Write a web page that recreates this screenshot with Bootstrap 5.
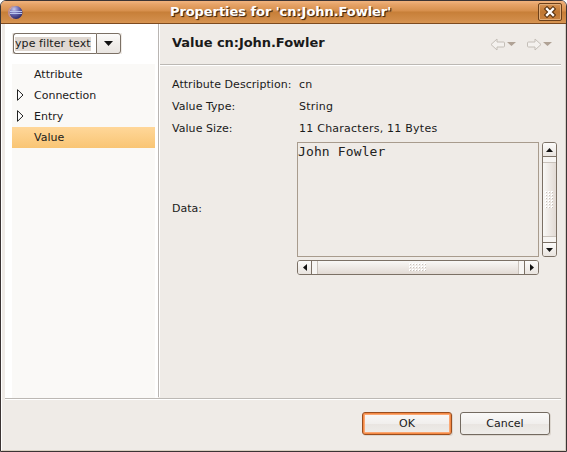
<!DOCTYPE html>
<html lang="en">
<head>
<meta charset="utf-8">
<meta name="viewport" content="width=device-width, initial-scale=1">
<title>Properties for 'cn:John.Fowler'</title>
<link href="https://cdn.jsdelivr.net/npm/bootstrap@5.3.0/dist/css/bootstrap.min.css" rel="stylesheet">
<style>
html,body{height:100%;overflow:hidden}
body{background:#fff;font-family:"DejaVu Sans",sans-serif;font-size:11px;line-height:14px;color:#1a1a1a}
svg{display:block;flex:none}
.win{width:567px;height:452px;background:#efebe7;border:1px solid #3b3434;border-radius:6px 6px 0 0;overflow:hidden}
.titlebar{flex:none;height:23px;border-bottom:1px solid #7d4a1f;padding:0 4px 0 7px;background:linear-gradient(#f0b683 0,#e7a469 3px,#d68f4c 10px,#c77f38 11px,#d18c49 19px,#d89552 22px);box-shadow:inset 0 1px #efb07a}
.title-text{font-size:13px;letter-spacing:-.06px;font-weight:700;color:#fff;text-shadow:1px 1px 1px #4a2a10,1px 1px 0 #6b4420;white-space:nowrap;line-height:20px}
.close-btn{width:24px;height:18px;border:1px solid #6d4019;border-radius:2px;box-shadow:inset 0 0 0 1px #e0ac78;background:linear-gradient(#d99455,#bf7731 50%,#c98340);padding:0}
.inner{padding:0 4px 0 3px;border-left:1px solid #fff;border-right:1px solid #d3ccc3;border-bottom:1px solid #d8cfc0}
.upper{height:374px}
.side{width:153px;background:#fff;padding:9px 4px 0 7px}
.vline{width:2px;height:373px;background:linear-gradient(90deg,#b9b5b2 50%,#fff 50%)}
.hline{height:2px;background:linear-gradient(#bcb8b4 50%,#fff 50%)}
.filter{width:110px;height:21px;margin-bottom:10px;background:#efebe7}
.filter-field{width:83px;background:#fff;border:1px solid #7b7065;border-right:0;border-radius:3px 0 0 3px;margin-left:1px;padding:3px 0 2px 1px;overflow:hidden}
.filter-sel{display:block;width:76px;height:14px;background:#e0d8d1;white-space:nowrap;overflow:visible;letter-spacing:.08px}
.filter-drop{width:25px;border:1px solid #7b7065;border-radius:0 3px 3px 0;background:linear-gradient(#fcfbfa,#f1eeeb 50%,#e9e5e1)}
.tree{width:143px;height:334px;background:#faf9f7}
.tree-row{height:21px;padding:1px 0 0 5px}
.tree-row .twist{width:17px;padding-bottom:2px}
.tree-row.sel{background:linear-gradient(#ffd799,#f9c574)}
.head{height:40px;padding:0 7px 0 12px}
.head-title{font-size:13px;line-height:18px;font-weight:700;white-space:nowrap;letter-spacing:-.05px;padding-bottom:2px}
.prop{height:22px;padding-left:12px}
.prop-name{width:127px;white-space:nowrap;letter-spacing:.05px}
.val{letter-spacing:.24px}
.data-row{margin-top:2px;padding-left:12px}
.data-label{width:125px;height:133px}
.data-area{gap:3px;margin-bottom:3px}
.data-box{width:242px;height:115px;border:1px solid #a89b8d;font:13px/18px "DejaVu Sans Mono",monospace;letter-spacing:.13px;color:#222}
.vs{width:15px;height:115px;border:1px solid #7b7065;border-radius:3px;background:#f7f5f3;overflow:hidden}
.hs{width:242px;height:15px;border:1px solid #7b7065;border-radius:3px;background:#f7f5f3;overflow:hidden}
.vs .cap{height:14px;background:linear-gradient(#fcfbfa,#e9e4df)}
.vs .cap:first-child{border-bottom:1px solid #7b7065}
.vs .cap:last-child{border-top:1px solid #7b7065}
.vs .thumb{margin:5px 0;background:linear-gradient(90deg,#f9f8f6,#e2dad4);border-top:1px solid #c9c2bb;border-bottom:1px solid #c9c2bb}
.hs .cap{width:14px;background:linear-gradient(#fcfbfa,#e9e4df)}
.hs .cap:first-child{border-right:1px solid #7b7065}
.hs .cap:last-child{border-left:1px solid #7b7065}
.hs .thumb{margin:0 5px;background:linear-gradient(#f9f8f6,#e2dad4);border-left:1px solid #c9c2bb;border-right:1px solid #c9c2bb}
.dlg-btn{--bs-btn-font-size:11px;width:90px;height:23px;padding:0;line-height:14px;border:1px solid #736a60;border-radius:3px;color:#1a1a1a;background:linear-gradient(#faf9f8,#f1efed 50%,#e9e5e1 52%,#efedea);box-shadow:1px 1px #dcd6cf}
.dlg-btn.ok{border-color:#9a4d1e;box-shadow:inset 0 0 0 1px #f48a46,inset 0 0 0 2px #fba772,1px 1px #dcd6cf}
.foot{padding:12px 11px 0 0;height:50px;gap:8px}
</style>
</head>
<body>
<div class="win d-flex flex-column">
  <div class="titlebar d-flex align-items-center justify-content-between">
    <svg width="15" height="14" viewBox="0 0 15 14"><defs><radialGradient id="orb" cx=".35" cy=".25" r=".8"><stop offset="0" stop-color="#c9c8e8"/><stop offset=".5" stop-color="#6664ad"/><stop offset="1" stop-color="#282562"/></radialGradient></defs><path d="M5 1C2 2 .5 4.500.5 7.500S2 13 5 13.500" fill="#e8a979" stroke="#b98a9c"/><circle cx="8" cy="7.500" r="6.500" fill="url(#orb)"/><path d="M2 6.500h12M2 8.500h12" stroke="#b9c6ee"/></svg>
    <div class="title-text">Properties for 'cn:John.Fowler'</div>
    <button class="close-btn d-flex align-items-center justify-content-center" aria-label="Close"><svg width="12" height="12" viewBox="0 0 12 12"><path d="M3 3l6 6M9 3l-6 6" stroke="#5f3712" stroke-width="4.600" stroke-linecap="square"/><path d="M3 3l6 6M9 3l-6 6" stroke="#fff" stroke-width="2.300" stroke-linecap="square"/></svg></button>
  </div>
  <div class="inner flex-grow-1">
    <div class="upper d-flex">
      <div class="side">
        <div class="filter d-flex">
          <div class="filter-field"><span class="filter-sel">ype filter text</span></div>
          <div class="filter-drop d-flex align-items-center justify-content-center"><svg width="9" height="5"><path d="M0 0h9L4.500 5z" fill="#111"/></svg></div>
        </div>
        <div class="tree">
          <div class="tree-row d-flex align-items-center"><span class="twist"></span>Attribute</div>
          <div class="tree-row d-flex align-items-center"><span class="twist"><svg width="7" height="12"><path d="M.5 .7v10.600L6 6z" fill="#fff" stroke="#222"/></svg></span>Connection</div>
          <div class="tree-row d-flex align-items-center"><span class="twist"><svg width="7" height="12"><path d="M.5 .7v10.600L6 6z" fill="#fff" stroke="#222"/></svg></span>Entry</div>
          <div class="tree-row sel d-flex align-items-center"><span class="twist"></span>Value</div>
        </div>
      </div>
      <div class="vline"></div>
      <div class="flex-grow-1">
        <div class="head d-flex align-items-center">
          <div class="head-title me-auto">Value cn:John.Fowler</div>
          <svg width="64" height="16" viewBox="0 0 64 16"><g fill="#f4f1ee" stroke="#c4beb7"><path d="M1 8.500L7 3v3h6.500q1 0 1 1v3q0 1-1 1H7v3z"/><path d="M51 8.500L45 3v3h-6.500q-1 0-1 1v3q0 1 1 1H45v3z"/></g><path d="M17 6h9l-4.500 4zM53 6h9l-4.500 4z" fill="#b0a295"/></svg>
        </div>
        <div class="hline"></div>
        <div class="pt-2">
          <div class="prop d-flex align-items-center"><span class="prop-name">Attribute Description:</span><span class="val">cn</span></div>
          <div class="prop d-flex align-items-center"><span class="prop-name">Value Type:</span><span class="val">String</span></div>
          <div class="prop d-flex align-items-center"><span class="prop-name">Value Size:</span><span class="val">11 Characters, 11 Bytes</span></div>
        </div>
        <div class="d-flex data-row">
          <div class="data-label d-flex align-items-center">Data:</div>
          <div>
            <div class="d-flex data-area">
              <div class="data-box">John Fowler</div>
              <div class="vs d-flex flex-column">
                <div class="cap d-flex align-items-center justify-content-center"><svg width="7" height="4"><path d="M0 4L3.500 0 7 4z" fill="#111"/></svg></div>
                <div class="thumb flex-grow-1 d-flex align-items-center justify-content-center"><svg width="9" height="18"><defs><pattern id="grip" width="3" height="3" patternUnits="userSpaceOnUse"><path d="M0 0h2v2H0z" fill="#fff"/><path d="M1 1h1v1H1z" fill="#c8c1bb"/></pattern></defs><path d="M0 0h9v18H0z" fill="url(#grip)"/></svg></div>
                <div class="cap d-flex align-items-center justify-content-center"><svg width="7" height="4"><path d="M0 0h7L3.500 4z" fill="#111"/></svg></div>
              </div>
            </div>
            <div class="hs d-flex">
              <div class="cap d-flex align-items-center justify-content-center"><svg width="4" height="7"><path d="M4 0v7L0 3.500z" fill="#111"/></svg></div>
              <div class="thumb flex-grow-1 d-flex align-items-center justify-content-center"><svg width="18" height="9"><path d="M0 0h18v9H0z" fill="url(#grip)"/></svg></div>
              <div class="cap d-flex align-items-center justify-content-center"><svg width="4" height="7"><path d="M0 0v7l4-3.500z" fill="#111"/></svg></div>
            </div>
          </div>
        </div>
      </div>
    </div>
    <div class="hline"></div>
    <div class="foot d-flex justify-content-end">
      <button class="btn dlg-btn ok">OK</button>
      <button class="btn dlg-btn">Cancel</button>
    </div>
  </div>
</div>
<script src="https://cdn.jsdelivr.net/npm/bootstrap@5.3.0/dist/js/bootstrap.bundle.min.js"></script>
</body>
</html>
